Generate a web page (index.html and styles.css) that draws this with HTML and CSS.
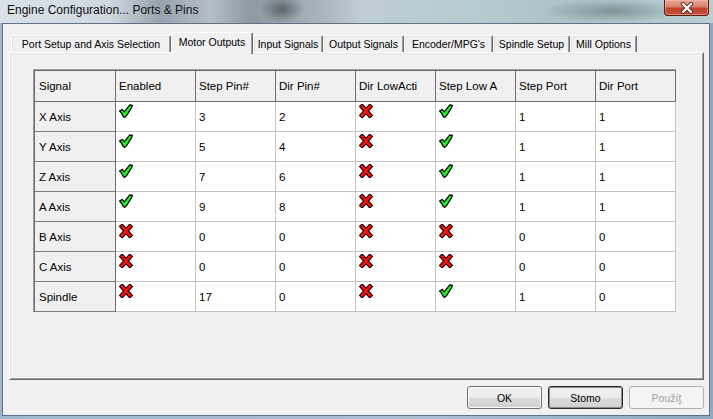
FILE: index.html
```html
<!DOCTYPE html>
<html lang="cs">
<head>
  <meta charset="UTF-8">
  <title>Engine Configuration... Ports &amp; Pins</title>
  <link rel="stylesheet" href="styles.css">
</head>
<body>
  <!-- shared icons for the grid -->
  <svg class="icon-defs" width="0" height="0">
    <symbol id="ico-yes" viewBox="0 0 14 14">
      <path d="M0.6 7 L3.2 5.4 L5.2 7.8 L10.8 0.8 L13.4 1.4 L12.8 3.2 L7.6 11.6 L5.8 13.4 L4.2 12.4 L2.6 9.4 Z" fill="#22ee22" stroke="#000" stroke-width="1.2" stroke-linejoin="round"/>
    </symbol>
    <symbol id="ico-no" viewBox="0 0 13 14">
      <path d="M2.6 2.6 L10.4 11.4 M10.4 2.6 L2.6 11.4" stroke="#000" stroke-width="4.8" stroke-linecap="square"/>
      <path d="M2.6 2.6 L10.4 11.4 M10.4 2.6 L2.6 11.4" stroke="#f01010" stroke-width="2.8" stroke-linecap="square"/>
    </symbol>
  </svg>

  <div class="window">
    <div class="caption">
      <span class="caption-text">Engine Configuration... Ports &amp; Pins</span>
      <span class="close-btn">
        <svg width="14" height="12" viewBox="0 0 14 12">
          <path d="M3 2 L11 10 M11 2 L3 10" stroke="#5a2a22" stroke-width="4.2" stroke-linecap="round"/>
          <path d="M3 2 L11 10 M11 2 L3 10" stroke="#fff" stroke-width="2.4" stroke-linecap="round"/>
        </svg>
      </span>
    </div>

    <div class="client">
      <ul class="tabs">
        <li class="tab tab-port">Port Setup and Axis Selection</li>
        <li class="tab tab-motor active">Motor Outputs</li>
        <li class="tab tab-input">Input Signals</li>
        <li class="tab tab-output">Output Signals</li>
        <li class="tab tab-encoder">Encoder/MPG's</li>
        <li class="tab tab-spindle">Spindle Setup</li>
        <li class="tab tab-mill">Mill Options</li>
      </ul>

      <div class="panel">
        <table class="grid">
          <thead>
            <tr>
              <th class="sig">Signal</th>
              <th>Enabled</th>
              <th>Step Pin#</th>
              <th>Dir Pin#</th>
              <th>Dir LowActi</th>
              <th>Step Low A</th>
              <th>Step Port</th>
              <th>Dir Port</th>
            </tr>
          </thead>
          <tbody>
            <tr>
              <td class="sig">X Axis</td>
              <td class="ico"><svg><use href="#ico-yes"/></svg></td>
              <td>3</td><td>2</td>
              <td class="ico"><svg><use href="#ico-no"/></svg></td>
              <td class="ico"><svg><use href="#ico-yes"/></svg></td>
              <td>1</td><td>1</td>
            </tr>
            <tr>
              <td class="sig">Y Axis</td>
              <td class="ico"><svg><use href="#ico-yes"/></svg></td>
              <td>5</td><td>4</td>
              <td class="ico"><svg><use href="#ico-no"/></svg></td>
              <td class="ico"><svg><use href="#ico-yes"/></svg></td>
              <td>1</td><td>1</td>
            </tr>
            <tr>
              <td class="sig">Z Axis</td>
              <td class="ico"><svg><use href="#ico-yes"/></svg></td>
              <td>7</td><td>6</td>
              <td class="ico"><svg><use href="#ico-no"/></svg></td>
              <td class="ico"><svg><use href="#ico-yes"/></svg></td>
              <td>1</td><td>1</td>
            </tr>
            <tr>
              <td class="sig">A Axis</td>
              <td class="ico"><svg><use href="#ico-yes"/></svg></td>
              <td>9</td><td>8</td>
              <td class="ico"><svg><use href="#ico-no"/></svg></td>
              <td class="ico"><svg><use href="#ico-yes"/></svg></td>
              <td>1</td><td>1</td>
            </tr>
            <tr>
              <td class="sig">B Axis</td>
              <td class="ico"><svg><use href="#ico-no"/></svg></td>
              <td>0</td><td>0</td>
              <td class="ico"><svg><use href="#ico-no"/></svg></td>
              <td class="ico"><svg><use href="#ico-no"/></svg></td>
              <td>0</td><td>0</td>
            </tr>
            <tr>
              <td class="sig">C Axis</td>
              <td class="ico"><svg><use href="#ico-no"/></svg></td>
              <td>0</td><td>0</td>
              <td class="ico"><svg><use href="#ico-no"/></svg></td>
              <td class="ico"><svg><use href="#ico-no"/></svg></td>
              <td>0</td><td>0</td>
            </tr>
            <tr>
              <td class="sig">Spindle</td>
              <td class="ico"><svg><use href="#ico-no"/></svg></td>
              <td>17</td><td>0</td>
              <td class="ico"><svg><use href="#ico-no"/></svg></td>
              <td class="ico"><svg><use href="#ico-yes"/></svg></td>
              <td>1</td><td>0</td>
            </tr>
          </tbody>
        </table>
      </div>

      <div class="buttons">
        <button class="btn">OK</button>
        <button class="btn default">Stomo</button>
        <button class="btn" disabled>Použí<u>t</u></button>
      </div>
    </div>
  </div>
</body>
</html>
```

FILE: styles.css
```css
/*reset*/
body, div, ul, li, table, th, td {
    padding: 0;
    margin: 0;
}

li {
    list-style: none;
}

body {
    width: 713px;
    height: 419px;
    overflow: hidden;
    background: linear-gradient(90deg, #9fb7cd 0, #a9bfd2 60%, #8fa8bf 100%);
    font-family: "Liberation Sans", Arial, sans-serif;
    color: #000;
}

.icon-defs {
    position: absolute;
    width: 0;
    height: 0;
}

/*title bar*/
.caption {
    display: flex;
    align-items: flex-start;
    height: 23px;
    padding-left: 7px;
    box-sizing: border-box;
    background:
        radial-gradient(ellipse 22px 14px at 282px 9px, rgba(45, 50, 55, .55), transparent),
        radial-gradient(ellipse 70px 12px at 612px 11px, rgba(70, 85, 88, .45), transparent),
        linear-gradient(90deg, #d9e1e9 0, #cfd8e1 110px, #97a3ae 160px, #b4bec8 210px, #8e99a3 250px, #a7b3bd 320px, #bfcdd6 360px, #b6cbd1 470px, #aac4c9 560px, #b9cdd3 713px);
}

.caption-text {
    padding-top: 2px;
    font-size: 12px;
    line-height: 16px;
    color: #111;
}

.close-btn {
    display: flex;
    align-items: center;
    justify-content: center;
    width: 45px;
    height: 16px;
    margin-left: auto;
    margin-right: 4px;
    box-sizing: border-box;
    border: 1px solid #5b1b12;
    border-top: 0;
    border-radius: 0 0 4px 4px;
    background: linear-gradient(#e8a595 0, #d9826e 45%, #c2412a 55%, #c9553c 100%);
    box-shadow: inset 0 0 0 1px rgba(255, 200, 190, .45);
}

/*dialog body*/
.client {
    height: 393px;
    margin: 0 3px 0 2px;
    padding: 8px 5px 0 6px;
    box-sizing: border-box;
    border: 1px solid #5f7287;
    background: #f0f0f0;
    font-size: 10.5px;
}

.tabs {
    display: flex;
    align-items: flex-end;
    height: 22px;
    padding-left: 2px;
    margin-bottom: -2px;
    position: relative;
    z-index: 1;
}

.tab {
    height: 17px;
    margin-bottom: 2px;
    box-sizing: border-box;
    border-top: 1px solid #fff;
    border-left: 1px solid #fff;
    border-right: 1px solid #696969;
    border-radius: 2px 2px 0 0;
    box-shadow: inset -1px 0 0 #a0a0a0, inset 1px 1px 0 #e3e3e3;
    background: #f0f0f0;
    text-align: center;
    line-height: 16px;
    white-space: nowrap;
}

.tab.active {
    height: 22px;
    margin-bottom: 0;
    padding-top: 1px;
    box-shadow: inset -1px 0 0 #a0a0a0;
}

.tab-port { width: 160px; }
.tab-motor { width: 82px; }
.tab-input { width: 70px; }
.tab-output { width: 81px; }
.tab-encoder { width: 89px; }
.tab-spindle { width: 77px; }
.tab-mill { width: 67px; }

.panel {
    height: 328px;
    padding: 16px 0 0 23px;
    box-sizing: border-box;
    border: 1px solid;
    border-color: #fff #696969 #696969 #fff;
    box-shadow: inset 1px 1px 0 #e3e3e3, inset -1px -1px 0 #a0a0a0;
}

/*grid*/
.grid {
    width: 643px;
    table-layout: fixed;
    border-collapse: separate;
    border-spacing: 0;
    border-top: 1px solid #a0a0a0;
    border-left: 1px solid #a0a0a0;
    font-size: 11.5px;
}

.grid th,
.grid td {
    box-sizing: border-box;
    width: 80px;
    padding: 0 0 0 3px;
    text-align: left;
    font-weight: normal;
    white-space: nowrap;
    overflow: hidden;
}

.grid th {
    height: 32px;
    border-top: 1px solid #696969;
    border-right: 1px solid #6e6e6e;
    border-bottom: 1px solid #6e6e6e;
    background: #f0f0f0;
}

.grid td {
    height: 30px;
    border-right: 1px solid #c3c3c3;
    border-bottom: 1px solid #c3c3c3;
    background: #fff;
}

.grid .sig {
    width: 82px;
    padding-left: 4px;
    border-left: 1px solid #696969;
    border-right-color: #6e6e6e;
    background: #f0f0f0;
}

.grid td.sig {
    border-bottom-color: #7d7d7d;
}

.grid td.ico {
    vertical-align: top;
    padding-top: 2px;
}

.grid td.ico svg {
    display: block;
    width: 14px;
    height: 14px;
}

/*buttons*/
.buttons {
    display: flex;
    justify-content: flex-end;
    gap: 6px;
    margin-top: 6px;
}

.btn {
    width: 75px;
    height: 23px;
    padding: 0;
    border: 1px solid #707070;
    border-radius: 3px;
    background: linear-gradient(#f2f2f2 0, #ebebeb 50%, #dddddd 50%, #cfcfcf 100%);
    box-shadow: inset 0 0 0 1px #fbfbfb;
    font-family: inherit;
    font-size: 10.5px;
    color: #000;
}

.btn.default {
    border-color: #2b2b2b;
    box-shadow: inset 0 0 0 1px #8c8c8c;
}

.btn:disabled {
    border-color: #adb2b5;
    background: #f4f4f4;
    box-shadow: none;
    color: #a0a0a0;
}
```
